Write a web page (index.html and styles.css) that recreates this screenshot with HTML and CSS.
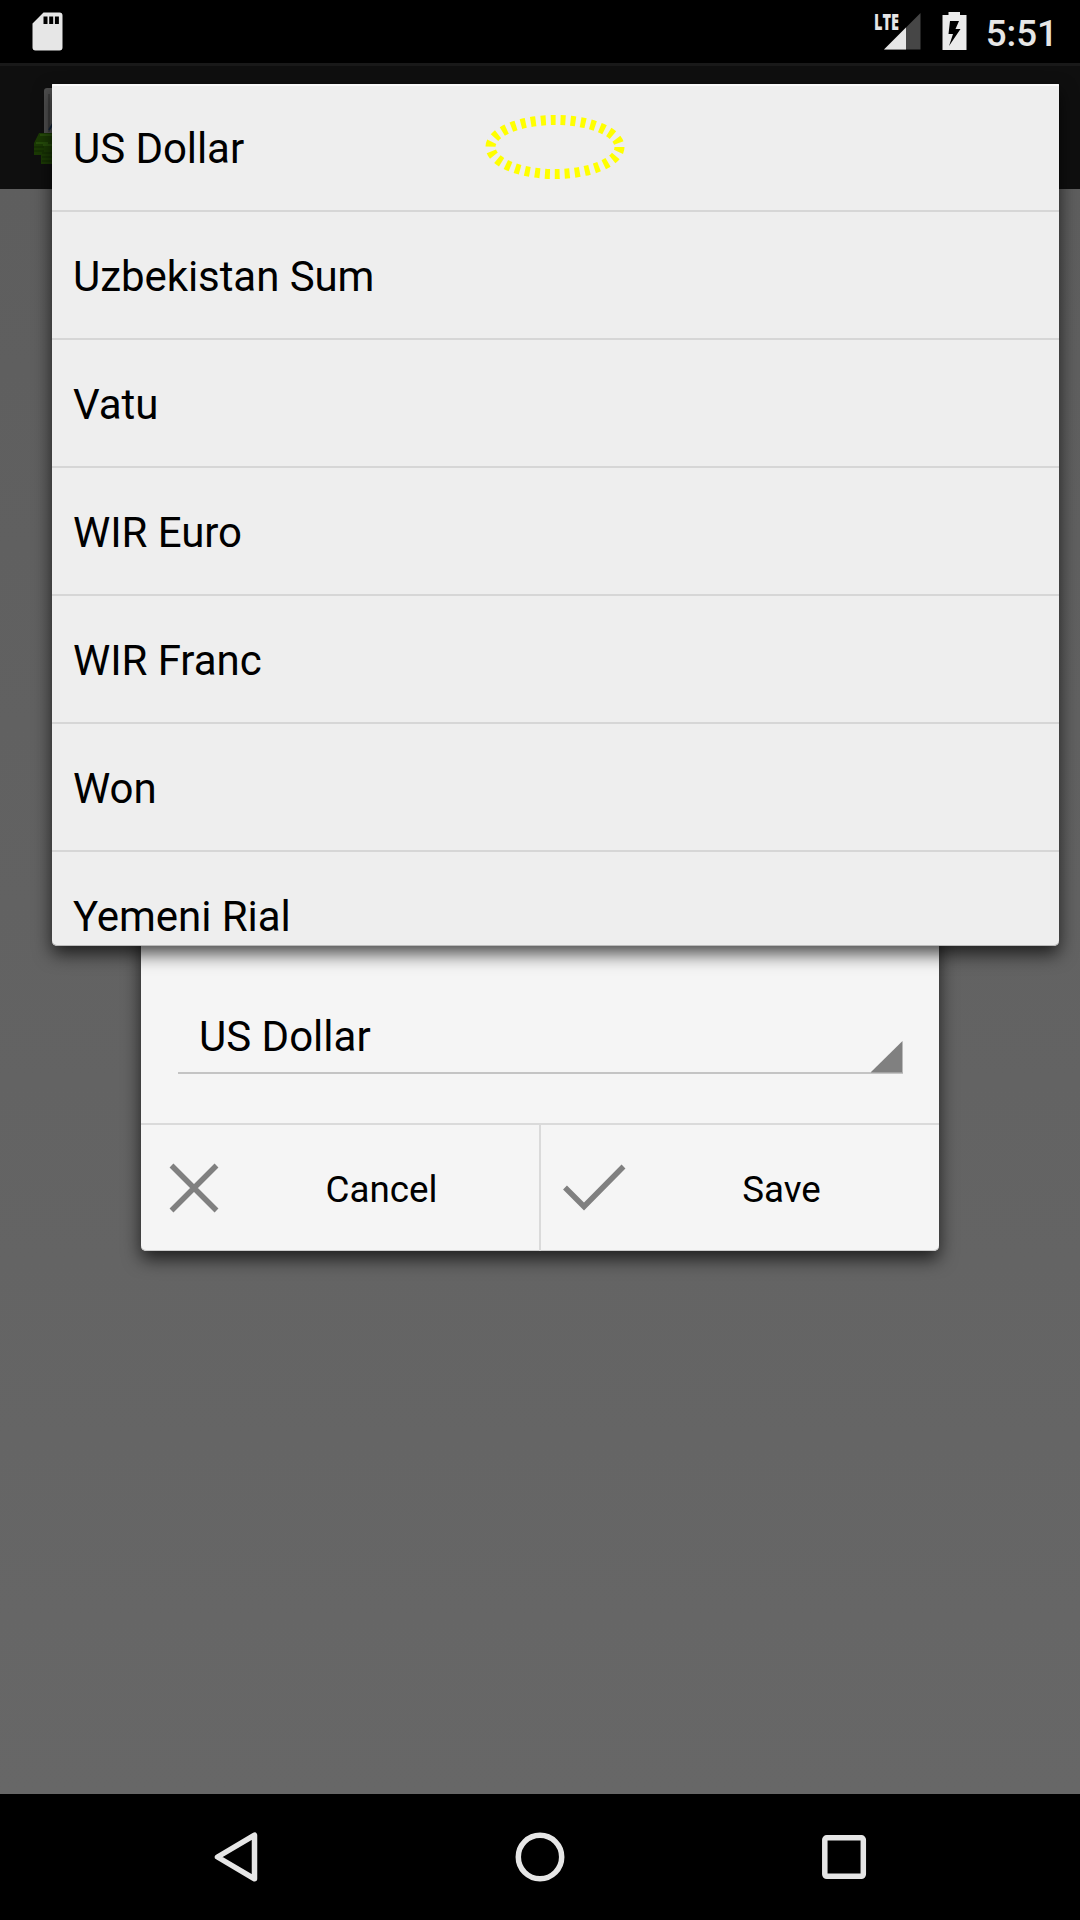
FILE: index.html
```html
<!DOCTYPE html>
<html lang="en">
<head>
<meta charset="utf-8">
<title>Currency</title>
<link rel="stylesheet" href="styles.css">
</head>
<body>
<div class="screen">
  <header class="status">
    <svg class="sd" width="31" height="39" viewBox="0 0 31 39"><path fill="#e6e6e6" fill-rule="evenodd" d="M11.500 .5H27.500a3 3 0 0 1 3 3V35.500a3 3 0 0 1-3 3H3.500a3 3 0 0 1-3-3V11.500ZM11.500 4.500V12h4V4.500ZM17.200 4.500V12h4V4.500ZM22.900 4.500V12h4V4.500Z"/></svg>
    <div class="signal">
      <svg width="37" height="37" viewBox="0 0 37 37"><path fill="#464646" d="M36.500 0V36.500H0Z"/><path fill="#e6e6e6" d="M22 14.500V36.500H0Z"/></svg>
      <span class="lte">LTE</span>
    </div>
    <svg class="battery" width="25" height="38" viewBox="0 0 25 38"><path fill="#ebebeb" fill-rule="evenodd" d="M6.500 0H18V3H24.500V38H.5V3H6.500ZM8 9L6.500 22H11L7 34L18.500 17H13.500L17 9Z"/></svg>
    <span class="time">5:51</span>
  </header>
  <div class="actionbar">
    <svg width="40" height="80" viewBox="0 0 40 80"><rect x="10" y="2" width="30" height="60" rx="3" fill="#505050"/><path d="M15 8V46" stroke="#383838" stroke-width="1.500"/><path d="M15 44L20 36" stroke="#14263c" stroke-width="2"/><path d="M5 47H25V78H7V69H0V57Z" fill="#1b3a04"/><path d="M6 49H20M2 57H14M9 59H22" stroke="#356313" stroke-width="1"/><path d="M0 61H10M0 65H10M8 67H22M8 71H22M8 75H22" stroke="#122803" stroke-width="1"/></svg>
  </div>
  <main class="content"></main>
  <nav class="nav">
    <svg width="50" height="50" viewBox="0 0 50 50"><path d="M6.500 25L43.500 3.200V46.800Z"/></svg>
    <svg width="50" height="50" viewBox="0 0 50 50"><circle cx="25" cy="25" r="21.700"/></svg>
    <svg width="50" height="50" viewBox="0 0 50 50"><rect x="5.800" y="5.800" width="38.500" height="38.500" rx="2"/></svg>
  </nav>

  <section class="dialog">
    <div class="field"><div class="spinner"><span>US Dollar</span><svg width="32" height="33" viewBox="0 0 32 33"><path fill="#808080" d="M31.500 1V32.500H0V32Z"/></svg></div></div>
    <div class="buttons">
      <div class="button"><svg width="84" height="84" viewBox="0 0 84 84"><path d="M19.500 19.500L64.500 64.500M64.500 19.500L19.500 64.500"/></svg><span>Cancel</span></div>
      <div class="button"><svg width="84" height="84" viewBox="0 0 84 84"><path d="M13 41.500L32 60.500L71.500 20.500"/></svg><span>Save</span></div>
    </div>
  </section>

  <ul class="popup">
    <li>US Dollar</li>
    <li>Uzbekistan Sum</li>
    <li>Vatu</li>
    <li>WIR Euro</li>
    <li>WIR Franc</li>
    <li>Won</li>
    <li>Yemeni Rial</li>
  </ul>
  <svg class="marker" width="140" height="66" viewBox="0 0 140 66"><ellipse cx="70" cy="33" rx="64.500" ry="27"/></svg>
</div>
</body>
</html>
```
FILE: styles.css
```css
* { box-sizing: border-box; }
body { margin: 0; font-family: Roboto, sans-serif; color: #000; }
.screen { position: relative; width: 1080px; height: 1920px; overflow: hidden; display: flex; flex-direction: column; }
svg { display: block; flex: none; }

.status { height: 63px; background: #000; display: flex; align-items: flex-start; padding: 12px 22px 0 32px; color: #e6e6e6; }
.signal { position: relative; margin: 1px 21px 0 auto; }
.lte { position: absolute; left: -10px; top: -3px; font: 800 22px/22px "Open Sans", sans-serif; transform: scaleX(.66); transform-origin: 0 0; }
.battery { margin-right: 19px; }
.time { font-size: 36.75px; line-height: 43px; font-weight: 500; }

.actionbar { height: 126px; background: #0f0f0f; border-top: 3px solid #191919; padding: 20px 0 0 34px; }
.content { flex: 1; background: linear-gradient(#5e5e5e, #676767); }
.nav { height: 126px; background: #000; display: flex; justify-content: space-between; align-items: center; padding: 0 211px; }
.nav svg { fill: none; stroke: #e6e6e6; stroke-width: 5.5; stroke-linejoin: round; }

.dialog { position: absolute; left: 141px; top: 800px; width: 798px; height: 451px; display: flex; flex-direction: column; background: #f5f5f5; border-radius: 5px; box-shadow: 0 8px 18px rgba(0,0,0,.7), inset 0 -1px #ccc; }
.field { flex: 1; display: flex; flex-direction: column; justify-content: flex-end; padding: 0 36px 49px 37px; }
.spinner { height: 76px; border-bottom: 2px solid #c4c4c4; display: flex; align-items: flex-end; justify-content: space-between; font-size: 42px; line-height: 50px; }
.spinner span { padding: 0 0 10px 21px; }
.spinner svg { margin-bottom: -1px; }
.buttons { height: 128px; border-top: 2px solid #dadada; display: flex; }
.button { flex: 1; display: flex; align-items: center; padding: 0 12px 0 11px; font-size: 36.75px; }
.button + .button { border-left: 2px solid #dadada; }
.button svg { fill: none; stroke: #808080; stroke-width: 5.5; }
.button span { flex: 1; padding-top: 2px; text-align: center; }

.popup { position: absolute; left: 52px; top: 84px; width: 1007px; height: 862px; margin: 0; padding: 0; list-style: none; overflow: hidden; background: #eee; border-radius: 1px 1px 5px 5px; box-shadow: 0 8px 18px rgba(0,0,0,.7), inset 0 2px #fafafa, inset 0 -1px #bbb; }
.popup li { height: 128px; padding: 2px 0 0 21px; border-bottom: 2px solid #d6d6d6; font-size: 42px; line-height: 126px; letter-spacing: -.06px; }
.marker { position: absolute; left: 485px; top: 114px; fill: none; stroke: #ff0; stroke-width: 10; stroke-dasharray: 5 5; }
```
